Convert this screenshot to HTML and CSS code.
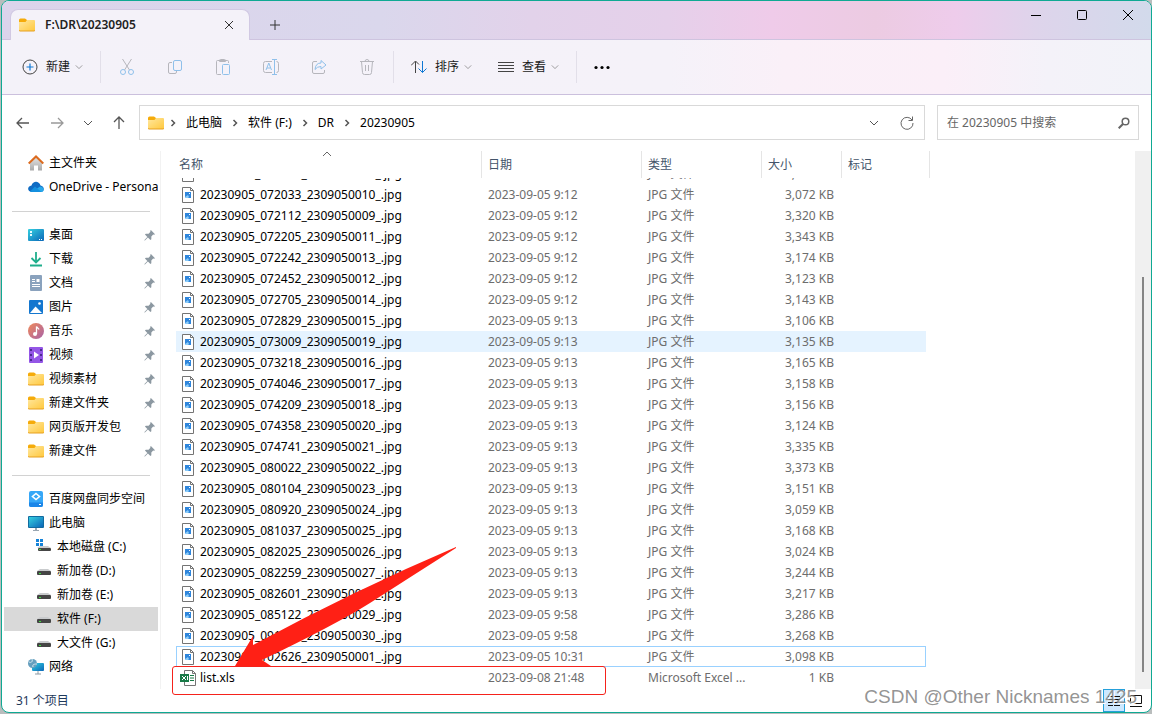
FILE: index.html
```html
<!DOCTYPE html>
<html lang="zh-CN">
<head>
  <meta charset="UTF-8" />
  <meta name="viewport" content="width=device-width, initial-scale=1.0"/>
  <title>F:\DR\20230905</title>
  <link rel="stylesheet" href="styles.css">
</head>
<body>
  <svg class="sprite" aria-hidden="true">
    <defs>
      <linearGradient id="g-folder" x1="0" y1="0" x2="1" y2="1"><stop offset="0" stop-color="#ffe8a0"/><stop offset="1" stop-color="#ffc83d"/></linearGradient>
      <linearGradient id="g-screen" x1="0" y1="0" x2="1" y2="1"><stop offset="0" stop-color="#35d0e0"/><stop offset="1" stop-color="#0b66b8"/></linearGradient>
      <linearGradient id="g-music" x1="0" y1="0" x2="1" y2="1"><stop offset="0" stop-color="#f08a5a"/><stop offset="1" stop-color="#a862a8"/></linearGradient>
      <linearGradient id="g-home" x1="0" y1="0" x2="0" y2="1"><stop offset="0" stop-color="#e8e8e8"/><stop offset="1" stop-color="#a9a9a9"/></linearGradient>
    </defs>
    <symbol id="folder" viewBox="0 0 16 16">
      <path d="M0 3q0-1.500 1.500-1.500h4.500l2 1.500v3H0z" fill="#f5ab0a"/>
      <path d="M0 5h6.500L8 3h7q1 0 1 1v9q0 1-1 1H1q-1 0-1-1z" fill="url(#g-folder)"/>
      <path d="M0 13q0 1 1 1h14q1 0 1-1" fill="none" stroke="#e6a020"/>
    </symbol>
    <symbol id="home" viewBox="0 0 16 16">
      <path d="M2 7l6-6 6 6v8.500h-4V10.500H6v5H2z" fill="url(#g-home)"/>
      <path d="M.7 8.500L8 1.500l7.300 7" fill="none" stroke="#dc6b1f" stroke-width="2"/>
    </symbol>
    <symbol id="cloud" viewBox="0 0 16 16">
      <path d="M3.500 6.500C5 1.500 11 1.500 12.500 6.500c4 .5 4.500 6 .5 6.500H3.500C-1 12.500-1 7 3.500 6.500z" fill="#0f6cc4"/>
      <path d="M4 13L12 7.500c4 0 5 5 1.500 5.500z" fill="#28a8ea"/>
      <path d="M2 12.500l5-5 6.500 5.500H3.500z" fill="#1490df"/>
    </symbol>
    <symbol id="desktop" viewBox="0 0 16 16">
      <rect y="2" width="16" height="12" rx="1" fill="url(#g-screen)"/>
      <path d="M2 4h2v2H2zM2 7h2v2H2z" fill="#e8fbff"/><path d="M11 12h1v1h-1zm2 0h1v1h-1z" fill="#fff"/>
    </symbol>
    <symbol id="download" viewBox="0 0 16 16">
      <path d="M8 1v10M3.500 7L8 11.500 12.500 7M2 14.500h12" fill="none" stroke="#1fae8c" stroke-width="1.800"/>
    </symbol>
    <symbol id="doc" viewBox="0 0 16 16">
      <rect x="2" y="0" width="12" height="16" rx="1" fill="#8aa2bd"/>
      <path d="M4 4.500h3M4 6.500h3M4 9.500h8M4 11.500h8" stroke="#fff"/><path d="M8.500 4h3v3h-3z" fill="#fff"/>
    </symbol>
    <symbol id="picture" viewBox="0 0 16 16">
      <rect x="1" y="1" width="14" height="14" rx="1" fill="#1477cf"/>
      <path d="M2 14l5.500-6.500L14 14z" fill="#fff"/><circle cx="11.500" cy="4.500" r="1.300" fill="#fff"/>
    </symbol>
    <symbol id="music" viewBox="0 0 16 16">
      <circle cx="8" cy="8" r="8" fill="url(#g-music)"/>
      <path d="M8.500 11V3.500c.5 1.500 2 1.500 2.500 3" fill="none" stroke="#fff" stroke-width="1.300"/><circle cx="7" cy="11" r="2" fill="#fff"/>
    </symbol>
    <symbol id="video" viewBox="0 0 16 16">
      <rect x="1" y="0" width="14" height="16" rx="1" fill="#9456e6"/>
      <path d="M2 2h2v2H2zm0 5h2v2H2zm0 5h2v2H2zM12 2h2v2h-2zm0 5h2v2h-2zm0 5h2v2h-2z" fill="#4c2a91"/>
      <path d="M6 4.500l5 3.500-5 3.500z" fill="#fff"/>
    </symbol>
    <symbol id="netdisk" viewBox="0 0 16 16">
      <rect x="1" y="0" width="14" height="16" rx="2" fill="#36a7f7"/><path d="M1 11.500h14V14q0 2-2 2H3q-2 0-2-2z" fill="#1b86e8"/>
      <path d="M8 2.500l3.500 3L8 8.500 4.500 5.500z" fill="none" stroke="#fff" stroke-width="1.600"/><path d="M11 13.500h2" stroke="#fff"/>
    </symbol>
    <symbol id="pc" viewBox="0 0 16 16">
      <rect x="0" y="1" width="16" height="12" rx="1" fill="#126b9f"/><rect x="1" y="2" width="14" height="10" fill="url(#g-screen)"/>
      <path d="M7 13h2v2H7z" fill="#9aa7b2"/><path d="M5 15.500h6" stroke="#9aa7b2"/>
    </symbol>
    <symbol id="drive" viewBox="0 0 16 16">
      <path d="M4 6h8l3 2H1z" fill="#c9cbcd"/><rect x="1" y="8" width="14" height="4" rx="1" fill="#454545"/><path d="M3 10.500h2" stroke="#3be03b"/>
    </symbol>
    <symbol id="system" viewBox="0 0 16 16">
      <path d="M4 7h8l3 2H1z" fill="#c9cbcd"/><rect x="2" y="9" width="13" height="3" rx="1" fill="#454545"/><path d="M3 10.500h2" stroke="#3be03b"/>
      <path d="M0 0h3v3H0zm4 0h3v3H4zM0 4h3v3H0zm4 0h3v3H4z" fill="#1583d8"/>
    </symbol>
    <symbol id="network" viewBox="0 0 16 16">
      <rect x="4" y="4" width="12" height="8" rx="1" fill="url(#g-screen)"/><path d="M10 12v3M7 15h6" stroke="#8b9aa5"/>
      <circle cx="4.500" cy="4.500" r="4.500" fill="#669fbe"/><path d="M1 3c2 1 4 0 3-3M5 8c-1-3 2-3 4-3" fill="none" stroke="#d5eaf2"/>
    </symbol>
    <symbol id="pin" viewBox="0 0 12 12">
      <path d="M7.500 0L12 4.500l-1 .8-1-.3-2 2v3l-1 1-2.700-2.700L1 11.500H.5V11l3.200-3.300L1 5l1-1h3l2-2-.3-1z" fill="#8c98a1"/>
    </symbol>
    <symbol id="jpg" viewBox="0 0 16 16">
      <path d="M2.500.5h8l3 3v12h-11z" fill="#fff" stroke="#747474"/><path d="M10.500.5v3h3" fill="none" stroke="#747474"/>
      <rect x="5" y="5" width="6" height="6" fill="#2f86dc"/><path d="M5 10l3-2 1 2-1 1H5z" fill="#8ccbf7"/><path d="M9 6h1v1H9z" fill="#fff"/>
    </symbol>
    <symbol id="xls" viewBox="0 0 16 16">
      <path d="M4.500.5h8l3 3v12h-11z" fill="#fff" stroke="#747474"/><path d="M12.500.5v3h3" fill="none" stroke="#747474"/>
      <path d="M10 5.500h4M10 8h4M10 10.500h4" stroke="#187a47"/>
      <path d="M0 4h9v8H0z" fill="#187a47"/><path d="M2 6l4 4M6 6l-4 4M7.500 6v4" stroke="#fff"/>
    </symbol>
    <symbol id="down" viewBox="0 0 10 10"><path d="M1 3l4 4 4-4" fill="none" stroke="currentColor"/></symbol>
    <symbol id="right" viewBox="0 0 10 10"><path d="M3.500 2l3 3-3 3" fill="none" stroke="currentColor" stroke-width="1.500"/></symbol>
  </svg>

  <div class="window">
    <header class="title-bar">
      <div class="tab">
        <svg class="icon"><use href="#folder"/></svg>
        <h1>F:\DR\20230905</h1>
        <button class="tab-close" aria-label="关闭标签页"><svg viewBox="0 0 10 10"><path d="M1 1l8 8M9 1L1 9" stroke="#333"/></svg></button>
      </div>
      <button class="tab-add" aria-label="新标签页"><svg viewBox="0 0 10 10"><path d="M5 0v10M0 5h10" stroke="#333"/></svg></button>
      <div class="window-buttons">
        <button aria-label="最小化"><svg viewBox="0 0 10 10"><path d="M0 5.500h10" stroke="#000"/></svg></button>
        <button aria-label="最大化"><svg viewBox="0 0 10 10"><rect x=".5" y=".5" width="9" height="9" rx="1" fill="none" stroke="#000"/></svg></button>
        <button aria-label="关闭"><svg viewBox="0 0 10 10"><path d="M0 0l10 10M10 0L0 10" stroke="#000"/></svg></button>
      </div>
    </header>

    <div class="toolbar">
      <button class="command">
        <svg class="icon" viewBox="0 0 16 16" fill="none"><circle cx="8" cy="8" r="7" stroke="#444"/><path d="M8 4.500v7M4.500 8h7" stroke="#0f78d4" stroke-width="1.200"/></svg>
        新建
        <svg class="chevron"><use href="#down"/></svg>
      </button>
      <span class="divider"></span>
      <div class="tools">
        <button aria-label="剪切"><svg class="icon" viewBox="0 0 16 16" fill="none"><path d="M3.500 0l7 11M12.500 0l-7 11" stroke="#b6b6bc"/><circle cx="4" cy="13" r="2.500" stroke="#8fc0ea"/><circle cx="12" cy="13" r="2.500" stroke="#8fc0ea"/></svg></button>
        <button aria-label="复制"><svg class="icon" viewBox="0 0 16 16" fill="none"><path d="M5 3.500H3q-1.500 0-1.500 1.500v8q0 1.500 1.500 1.500h5q1.500 0 1.500-1.500v-1" stroke="#b6b6bc"/><rect x="6.500" y="1.500" width="8" height="10" rx="1.500" stroke="#8fc0ea"/></svg></button>
        <button aria-label="粘贴"><svg class="icon" viewBox="0 0 16 16" fill="none"><path d="M6 15.500H2.500q-1 0-1-1v-12q0-1 1-1h10q1 0 1 1V4M4.500 1.500q0-1 1-1h4q1 0 1 1v1h-6z" stroke="#b6b6bc"/><rect x="7.500" y="5.500" width="7" height="10" rx="1" stroke="#8fc0ea"/></svg></button>
        <button aria-label="重命名"><svg class="icon" viewBox="0 0 16 16" fill="none"><path d="M9 2.500H2.500q-2 0-2 2v7q0 2 2 2H9M13.500 2.500q2 0 2 2v7q0 2-2 2" stroke="#b6b6bc"/><path d="M9 .5h5M11.500.5v15M9 15.500h5M3 11l2.800-7L8.500 11M4 9h3.500" stroke="#8fc0ea"/></svg></button>
        <button aria-label="共享"><svg class="icon" viewBox="0 0 16 16" fill="none"><path d="M6 2.500H3q-1.500 0-1.500 1.500v9q0 1.500 1.500 1.500h9q1.500 0 1.500-1.500v-2" stroke="#b6b6bc"/><path d="M10 1.500l5 4.500-5 4V7.500q-4 0-6 3Q4.500 4 10 4z" stroke="#8fc0ea"/></svg></button>
        <button aria-label="删除"><svg class="icon" viewBox="0 0 16 16" fill="none"><path d="M1 2.500h14M6 2.500q0-2 2-2t2 2M2.500 2.500l1 11q0 2 2 2h5q2 0 2-2l1-11M6.500 6v6M9.500 6v6" stroke="#b6b6bc"/></svg></button>
      </div>
      <span class="divider"></span>
      <div class="menus">
        <button class="command">
          <svg class="icon" viewBox="0 0 16 16" fill="none"><path d="M4.500 14V2.500M0 6.500l4.500-4.500L8 5.500" stroke="#444"/><path d="M11.500 2v11.500M7.500 9.500l4 4 4-4" stroke="#0f78d4"/></svg>
          排序
          <svg class="chevron"><use href="#down"/></svg>
        </button>
        <button class="command">
          <svg class="icon" viewBox="0 0 16 16"><path d="M0 3.500h16M0 6.500h16M0 9.500h16M0 12.500h16" stroke="#444"/></svg>
          查看
          <svg class="chevron"><use href="#down"/></svg>
        </button>
      </div>
      <span class="divider"></span>
      <button class="command" aria-label="更多"><svg class="icon" viewBox="0 0 16 16"><circle cx="2" cy="8.500" r="1.600"/><circle cx="8" cy="8.500" r="1.600"/><circle cx="14" cy="8.500" r="1.600"/></svg></button>
    </div>

    <div class="address-row">
      <div class="history">
        <button aria-label="后退"><svg class="icon" viewBox="0 0 16 16"><path d="M14 8H2M7 3L2 8l5 5" fill="none" stroke="#555" stroke-width="1.300"/></svg></button>
        <button aria-label="前进"><svg class="icon" viewBox="0 0 16 16"><path d="M2 8h12M9 3l5 5-5 5" fill="none" stroke="#999" stroke-width="1.300"/></svg></button>
        <button aria-label="最近的位置"><svg class="chevron"><use href="#down"/></svg></button>
        <button aria-label="上移"><svg class="icon" viewBox="0 0 16 16"><path d="M8 14V2M3 7l5-5 5 5" fill="none" stroke="#555" stroke-width="1.300"/></svg></button>
      </div>
      <div class="address-box">
        <svg class="icon"><use href="#folder"/></svg>
        <nav class="crumbs">
          <svg><use href="#right"/></svg><a href="#">此电脑</a>
          <svg><use href="#right"/></svg><a href="#">软件 (F:)</a>
          <svg><use href="#right"/></svg><a href="#">DR</a>
          <svg><use href="#right"/></svg><a href="#">20230905</a>
        </nav>
        <button aria-label="以前的位置"><svg class="chevron"><use href="#down"/></svg></button>
        <button aria-label="刷新"><svg class="icon" viewBox="0 0 16 16"><path d="M13 5A6 6 0 1 0 14 8M13.500 1.500V5.500h-4" fill="none" stroke="#666"/></svg></button>
      </div>
      <label class="search-box">
        <input type="text" aria-label="搜索" placeholder="在 20230905 中搜索" />
        <svg viewBox="0 0 12 12" fill="none" stroke="#666"><circle cx="7.500" cy="4.500" r="3.300" stroke-width="1.500"/><path d="M5 7l-4.300 4.300" stroke-width="2"/></svg>
      </label>
    </div>

    <main class="content">
      <nav class="sidebar" id="sidebar"></nav>

      <section class="file-pane">
        <table class="files">
          <thead>
            <tr><th>名称<svg class="sort-mark" viewBox="0 0 10 6"><path d="M1 5l4-4 4 4" fill="none" stroke="#666"/></svg></th><th>日期</th><th>类型</th><th>大小</th><th>标记</th></tr>
          </thead>
          <tbody id="file-rows"></tbody>
        </table>
        <div class="mark-box"></div>
        <svg class="mark-arrow" viewBox="0 0 222 120"><path d="M221 0Q120 43 18 98V89L0 119h36l-9-6Q100 78 135 56 177 29 221 1z" fill="#ff2015"/></svg>
      </section>
      <div class="scrollbar"><div class="thumb"></div></div>
    </main>

    <footer class="status-bar">
      <span>31 个项目</span>
      <div class="view-buttons">
        <button class="active" aria-label="详细信息"><svg viewBox="0 0 12 12"><path d="M0 1.500h5M6 1.500h6M0 4.500h5M6 4.500h6M0 7.500h5M6 7.500h6M0 10.500h5M6 10.500h6" stroke="#111"/></svg></button>
        <button aria-label="大图标"><svg viewBox="0 0 12 12"><path d="M.5.500h11v8H.5zM0 11.500h12" fill="none" stroke="#111"/></svg></button>
      </div>
    </footer>
    <div class="watermark">CSDN @Other Nicknames 1425</div>
  </div>

  <script>
    const places = [
      { icon: 'home', name: '主文件夹' },
      { icon: 'cloud', name: 'OneDrive - Personal' },
      null,
      { icon: 'desktop', name: '桌面', pinned: true },
      { icon: 'download', name: '下载', pinned: true },
      { icon: 'doc', name: '文档', pinned: true },
      { icon: 'picture', name: '图片', pinned: true },
      { icon: 'music', name: '音乐', pinned: true },
      { icon: 'video', name: '视频', pinned: true },
      { icon: 'folder', name: '视频素材', pinned: true },
      { icon: 'folder', name: '新建文件夹', pinned: true },
      { icon: 'folder', name: '网页版开发包', pinned: true },
      { icon: 'folder', name: '新建文件', pinned: true },
      null,
      { icon: 'netdisk', name: '百度网盘同步空间' },
      { icon: 'pc', name: '此电脑' },
      { icon: 'system', name: '本地磁盘 (C:)', cls: 'child' },
      { icon: 'drive', name: '新加卷 (D:)', cls: 'child' },
      { icon: 'drive', name: '新加卷 (E:)', cls: 'child' },
      { icon: 'drive', name: '软件 (F:)', cls: 'child selected' },
      { icon: 'drive', name: '大文件 (G:)', cls: 'child' },
      { icon: 'network', name: '网络' }
    ];

    const files = [
      ['071954_2309050008', '9:12', '3,215'],
      ['072033_2309050010', '9:12', '3,072'],
      ['072112_2309050009', '9:12', '3,320'],
      ['072205_2309050011', '9:12', '3,343'],
      ['072242_2309050013', '9:12', '3,174'],
      ['072452_2309050012', '9:12', '3,123'],
      ['072705_2309050014', '9:12', '3,143'],
      ['072829_2309050015', '9:13', '3,106'],
      ['073009_2309050019', '9:13', '3,135', 'hover'],
      ['073218_2309050016', '9:13', '3,165'],
      ['074046_2309050017', '9:13', '3,158'],
      ['074209_2309050018', '9:13', '3,156'],
      ['074358_2309050020', '9:13', '3,124'],
      ['074741_2309050021', '9:13', '3,335'],
      ['080022_2309050022', '9:13', '3,373'],
      ['080104_2309050023', '9:13', '3,151'],
      ['080920_2309050024', '9:13', '3,059'],
      ['081037_2309050025', '9:13', '3,168'],
      ['082025_2309050026', '9:13', '3,024'],
      ['082259_2309050027', '9:13', '3,244'],
      ['082601_2309050028', '9:13', '3,217'],
      ['085122_2309050029', '9:58', '3,286'],
      ['091245_2309050030', '9:58', '3,268'],
      ['102626_2309050001', '10:31', '3,098', 'focused']
    ];

    const icon = (name, cls = 'icon') => `<svg class="${cls}"><use href="#${name}"/></svg>`;

    const row = (type, name, date, kind, size, cls = '') =>
      `<tr class="${cls}"><td>${icon(type)}${name}</td><td>${date}</td><td>${kind}</td><td>${size} KB</td><td></td></tr>`;

    document.getElementById('sidebar').innerHTML = places.map(p => {
      if (!p) return '<hr>';
      return `<a href="#" class="place ${p.cls || ''}">${icon(p.icon)}<span>${p.name}</span>${p.pinned ? icon('pin', 'pin') : ''}</a>`;
    }).join('');

    document.getElementById('file-rows').innerHTML = files
      .map(([id, time, size, cls]) => row('jpg', `20230905_${id}_.jpg`, `2023-09-05 ${time}`, 'JPG 文件', size, cls))
      .join('') + row('xls', 'list.xls', '2023-09-08 21:48', 'Microsoft Excel ...', '1');
  </script>
</body>
</html>
```
FILE: styles.css
```css
* {
  margin: 0;
  padding: 0;
  box-sizing: border-box;
}

body {
  font-family: "Noto Sans", "Noto Sans CJK SC", sans-serif;
  font-size: 12px;
  line-height: 20px;
  color: #000;
  background: #b9bdbd;
  height: 100vh;
  padding: 0 0 1px 1px;
  overflow: hidden;
}

button {
  font: inherit;
  color: inherit;
  background: none;
  border: none;
  display: flex;
  align-items: center;
  justify-content: center;
}

a {
  color: inherit;
  text-decoration: none;
}

svg {
  flex: none;
}

.sprite {
  position: absolute;
  width: 0;
  height: 0;
}

.icon {
  width: 16px;
  height: 16px;
}

.chevron {
  width: 10px;
  height: 10px;
}

.window {
  position: relative;
  height: 100%;
  display: flex;
  flex-direction: column;
  background: #fff;
  border: 1px solid #0fa993;
  border-radius: 8px;
  overflow: hidden;
}

/* title bar */
.title-bar {
  height: 39px;
  display: flex;
  align-items: flex-end;
  padding-left: 8px;
  background: linear-gradient(90deg, #dbd4eb 0%, #dad7ec 33%, #e2d2ea 46%, #e5d0ea 58%, #efcbe9 67%, #eccbe2 76%, #eecceb 83%, #ded4eb 90%, #d2daeb 100%);
  box-shadow: inset 0 -1px #cec4df;
}

.tab {
  width: 240px;
  height: 31px;
  display: flex;
  align-items: center;
  gap: 10px;
  padding: 0 15px 0 8px;
  background: #f4f2f9;
  border: 1px solid #d1c9e3;
  border-bottom: none;
  border-radius: 8px 8px 0 0;
}

.tab h1 {
  flex: 1;
  font-size: 12px;
  font-weight: 600;
  color: #222;
}

.tab-close svg,
.tab-add svg {
  width: 10px;
  height: 10px;
}

.tab-add {
  width: 50px;
  height: 31px;
}

.window-buttons {
  display: flex;
  align-self: flex-start;
  margin-left: auto;
}

.window-buttons button {
  width: 46px;
  height: 28px;
}

.window-buttons svg {
  width: 10px;
  height: 10px;
}

/* toolbar */
.toolbar {
  height: 55px;
  display: flex;
  align-items: center;
  padding-left: 20px;
  background: linear-gradient(90deg, #f4f2f9 0%, #f5f2f9 58%, #faf0f8 68%, #fbeff8 82%, #f4f2f9 91%, #f2f3f9 100%);
  border-bottom: 1px solid #cbc0dd;
}

.command {
  gap: 8px;
  color: #1a1a1a;
}

.command .chevron {
  width: 8px;
  height: 8px;
  margin-left: -3px;
  color: #888;
}

.divider {
  width: 1px;
  height: 32px;
  margin: 0 17px;
  background: #e2dfe9;
}

.tools {
  display: flex;
  gap: 32px;
  padding: 0 1px;
}

.menus {
  display: flex;
  gap: 26px;
}

/* address row */
.address-row {
  display: flex;
  padding: 10px 12px 11px;
}

.history {
  display: flex;
  align-items: center;
  gap: 18px;
  width: 125px;
  padding-left: 1px;
  color: #555;
}

.address-box,
.search-box {
  height: 35px;
  display: flex;
  align-items: center;
  border: 1px solid #d9d9d9;
}

.address-box {
  flex: 1;
  gap: 20px;
  padding: 0 9px 0 8px;
  color: #555;
}

.crumbs {
  flex: 1;
  display: flex;
  align-items: center;
  gap: 8px;
  margin-left: -16px;
  color: #000;
}

.crumbs svg {
  width: 10px;
  height: 10px;
  color: #555;
}

.search-box {
  width: 202px;
  margin-left: 12px;
  padding: 0 8px 0 9px;
}

.search-box input {
  flex: 1;
  min-width: 0;
  font: inherit;
  border: none;
  outline: none;
}

.search-box input::placeholder {
  color: #666;
}

.search-box svg {
  width: 12px;
  height: 12px;
}

/* sidebar */
.content {
  flex: 1;
  min-height: 0;
  display: flex;
}

.sidebar {
  width: 159px;
  padding: 0 2px;
  border-right: 1px solid #f2f2f2;
  overflow: hidden;
}

.place {
  height: 24px;
  display: flex;
  align-items: center;
  gap: 5px;
  padding-left: 24px;
  white-space: nowrap;
}

.place span {
  flex: 1;
  min-width: 0;
  overflow: hidden;
}

.child {
  padding-left: 32px;
}

.selected {
  background: #d9d9d9;
}

.pin {
  width: 11px;
  height: 11px;
  margin-right: 3px;
}

.sidebar hr {
  height: 1px;
  margin: 12px 8px 11px;
  border: none;
  background: #d2d2d2;
}

/* file list */
.file-pane {
  position: relative;
  flex: 1;
  min-width: 0;
  padding-left: 15px;
}

.files {
  display: flex;
  flex-direction: column;
  height: 100%;
}

.files thead,
.files th,
.files td {
  display: block;
}

.files tr {
  display: grid;
  grid-template-columns: 306px 160px 120px 80px 88px;
  align-items: center;
}

.files th {
  height: 27px;
  padding: 4px 6px 0;
  border-right: 1px solid #e5e5e5;
  text-align: left;
  font-weight: normal;
  color: #44546a;
}

.files th:first-child {
  position: relative;
  padding-left: 3px;
}

.sort-mark {
  position: absolute;
  top: 0;
  left: 146px;
  width: 10px;
  height: 6px;
}

/* kept scrolled to the last row */
.files tbody {
  flex: 1;
  min-height: 0;
  display: flex;
  flex-direction: column;
  justify-content: flex-end;
  padding-bottom: 1px;
  overflow: hidden;
}

.files tbody tr {
  flex: none;
  width: 750px;
  height: 21px;
}

.files td {
  padding: 0 6px;
  color: #6d6d6d;
  white-space: nowrap;
}

.files td:first-child {
  display: flex;
  align-items: center;
  gap: 4px;
  padding-left: 4px;
  color: #000;
}

.files td:nth-child(4) {
  padding-right: 8px;
  text-align: right;
}

.files .hover {
  background: #e5f3ff;
}

.files .focused {
  box-shadow: inset 0 0 0 1px #99d1ff;
}

.mark-box {
  position: absolute;
  left: 11px;
  bottom: -6px;
  width: 434px;
  height: 29px;
  border: 1px solid #f5221b;
  border-radius: 3px;
  z-index: 1;
}

.mark-arrow {
  position: absolute;
  left: 74px;
  bottom: 22px;
  width: 222px;
  height: 120px;
}

.scrollbar {
  width: 16px;
  padding: 126px 7px 17px;
  background: #f0f0f0;
}

.thumb {
  width: 2px;
  height: 100%;
  background: #858585;
}

/* status bar */
.status-bar {
  height: 23px;
  display: flex;
  align-items: center;
  justify-content: space-between;
  padding: 0 4px 0 14px;
  color: #1e395b;
}

.view-buttons {
  display: flex;
}

.view-buttons button {
  width: 22px;
  height: 23px;
}

.view-buttons .active {
  background: #cce8ff;
  border: 1px solid #26a0da;
}

.view-buttons svg {
  width: 12px;
  height: 12px;
}

.watermark {
  position: absolute;
  right: 14px;
  bottom: 3px;
  font-family: "Liberation Sans", sans-serif;
  font-size: 19px;
  line-height: 24px;
  color: rgba(120, 120, 120, 0.8);
  text-shadow: 1px 1px #fff;
}
```
